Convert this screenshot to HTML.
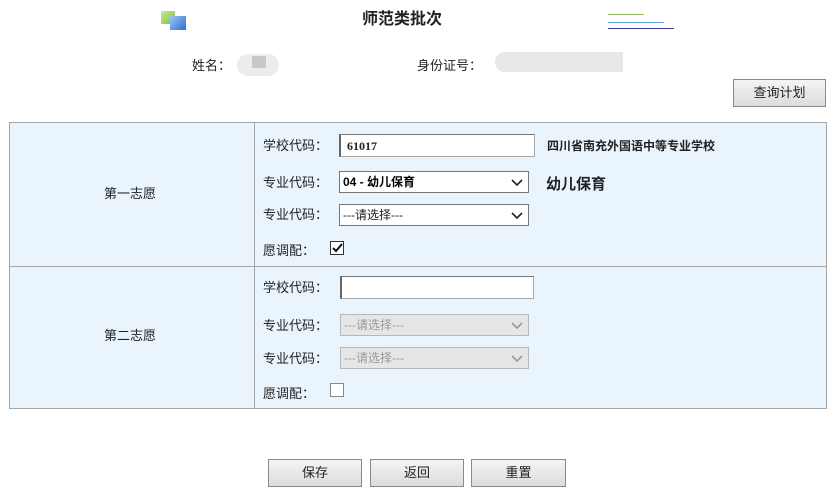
<!DOCTYPE html>
<html><head><meta charset="utf-8"><style>
*{margin:0;padding:0;box-sizing:border-box}
body{width:838px;height:499px;background:#fff;position:relative;overflow:hidden;font-family:"Liberation Sans","Noto Sans CJK SC",sans-serif;font-size:13px;color:#222}
.a{position:absolute;white-space:nowrap;line-height:15px}
.btn{position:absolute;background:linear-gradient(#f4f4f4,#dcdcdc);border:1px solid #8a8a8a;text-align:center;font-size:13px;color:#222}
.inp{position:absolute;background:#fff;border:1px solid #a8a8a8;border-top:1px solid #777;border-left:2px solid #666}
.sel{position:absolute;background:#fff;border:1px solid #777;height:22px;font-size:12px;padding-left:3px;line-height:20px}
.sel.dis{background:#e6e6e6;border-color:#b8b8b8;color:#999}
.arr{position:absolute;right:4px;top:3px;width:14px;height:14px}
.chk{position:absolute;width:14px;height:14px;border:1px solid #333;background:#fff}
</style></head><body>
<div class="a" style="left:161px;top:11px;width:14px;height:13px;background:linear-gradient(135deg,#cde890,#7cc23c)"></div>
<div class="a" style="left:170px;top:16px;width:16px;height:14px;background:linear-gradient(135deg,#9fc4f5,#2f6fd0)"></div>
<div class="a" style="left:362px;top:10px;font-size:16px;line-height:20px;font-weight:bold">师范类批次</div>
<div class="a" style="left:608px;top:14px;width:36px;height:1px;background:#8cc05a"></div>
<div class="a" style="left:608px;top:22px;width:56px;height:1px;background:#5aa8e8"></div>
<div class="a" style="left:608px;top:28px;width:66px;height:1px;background:#403a90"></div>
<div class="a" style="left:192px;top:58px">姓名：</div>
<div class="a" style="left:237px;top:54px;width:42px;height:22px;border-radius:11px;background:#ececec"></div>
<div class="a" style="left:252px;top:56px;width:14px;height:12px;background:#c8c8c8"></div>
<div class="a" style="left:417px;top:58px">身份证号：</div>
<div class="a" style="left:495px;top:52px;width:128px;height:20px;border-radius:10px 0 0 10px;background:#e8e8e8"></div>
<div class="btn" style="left:733px;top:79px;width:93px;height:28px;line-height:26px">查询计划</div>

<div class="a" style="left:9px;top:122px;width:818px;height:287px;background:#eaf4fc;border:1px solid #a6a6a6"></div>
<div class="a" style="left:254px;top:122px;width:1px;height:287px;background:#a6a6a6"></div>
<div class="a" style="left:9px;top:266px;width:818px;height:1px;background:#a6a6a6"></div>
<div class="a" style="left:104px;top:186px">第一志愿</div>
<div class="a" style="left:104px;top:328px">第二志愿</div>

<div class="a" style="left:263px;top:138px">学校代码：</div>
<div class="inp" style="left:339px;top:134px;width:196px;height:23px"></div>
<div class="a" style="left:347px;top:139px;font-weight:bold;font-size:12px;font-family:'Liberation Serif','Noto Serif CJK SC',serif">61017</div>
<div class="a" style="left:547px;top:139px;font-weight:bold;font-size:12px">四川省南充外国语中等专业学校</div>
<div class="a" style="left:263px;top:175px">专业代码：</div>
<div class="sel" style="left:339px;top:171px;width:190px;font-weight:bold;color:#000">04 - 幼儿保育<svg class="arr" viewBox="0 0 14 14"><path d="M2 5l5 5 5-5" fill="none" stroke="#222" stroke-width="1.6"/></svg></div>
<div class="a" style="left:546px;top:176px;font-size:15px;line-height:18px;font-weight:bold">幼儿保育</div>
<div class="a" style="left:263px;top:207px">专业代码：</div>
<div class="sel" style="left:339px;top:204px;width:190px">---请选择---<svg class="arr" viewBox="0 0 14 14"><path d="M2 5l5 5 5-5" fill="none" stroke="#222" stroke-width="1.6"/></svg></div>
<div class="a" style="left:263px;top:243px">愿调配：</div>
<div class="chk" style="left:330px;top:241px"><svg width="12" height="12" viewBox="0 0 12 12" style="position:absolute;left:0;top:0"><path d="M2 6l3 3 6-7" fill="none" stroke="#111" stroke-width="2"/></svg></div>

<div class="a" style="left:263px;top:280px">学校代码：</div>
<div class="inp" style="left:340px;top:276px;width:194px;height:23px"></div>
<div class="a" style="left:263px;top:318px">专业代码：</div>
<div class="sel dis" style="left:340px;top:314px;width:189px">---请选择---<svg class="arr" viewBox="0 0 14 14"><path d="M2 5l5 5 5-5" fill="none" stroke="#999" stroke-width="1.6"/></svg></div>
<div class="a" style="left:263px;top:351px">专业代码：</div>
<div class="sel dis" style="left:340px;top:347px;width:189px">---请选择---<svg class="arr" viewBox="0 0 14 14"><path d="M2 5l5 5 5-5" fill="none" stroke="#999" stroke-width="1.6"/></svg></div>
<div class="a" style="left:263px;top:386px">愿调配：</div>
<div class="chk" style="left:330px;top:383px;border-color:#888"></div>

<div class="btn" style="left:268px;top:459px;width:94px;height:28px;line-height:26px">保存</div>
<div class="btn" style="left:370px;top:459px;width:94px;height:28px;line-height:26px">返回</div>
<div class="btn" style="left:471px;top:459px;width:95px;height:28px;line-height:26px">重置</div>
</body></html>
